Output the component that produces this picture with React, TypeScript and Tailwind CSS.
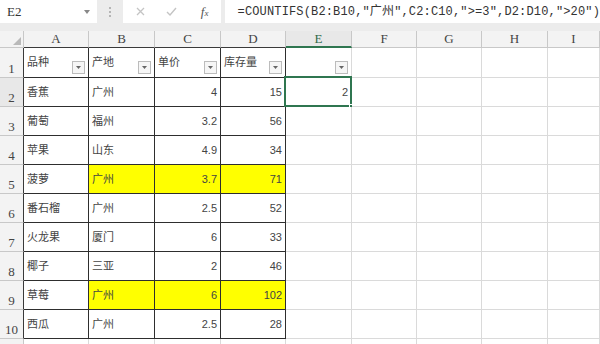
const colW = [
  'w-[65px]',
  'w-[66px]',
  'w-[66px]',
  'w-[65px]',
  'w-[66px]',
  'w-[65px]',
  'w-[65px]',
  'w-[66px]',
  'flex-1',
];
const letters = ['A', 'B', 'C', 'D', 'E', 'F', 'G', 'H', 'I'];

const data: string[][] = [
  ['品种', '产地', '单价', '库存量'],
  ['香蕉', '广州', '4', '15'],
  ['葡萄', '福州', '3.2', '56'],
  ['苹果', '山东', '4.9', '34'],
  ['菠萝', '广州', '3.7', '71'],
  ['番石榴', '广州', '2.5', '52'],
  ['火龙果', '厦门', '6', '33'],
  ['椰子', '三亚', '2', '46'],
  ['草莓', '广州', '6', '102'],
  ['西瓜', '广州', '2.5', '28'],
];

function FilterButton() {
  return (
    <div className="absolute right-[3px] bottom-[3px] w-[13px] h-[13px] border border-[#bcbcbc] bg-[#f6f6f6] flex items-center justify-center">
      <svg width="5" height="3" viewBox="0 0 5 3">
        <path d="M0 0 L5 0 L2.5 3 Z" fill="#666" />
      </svg>
    </div>
  );
}

function Cell({ r, c }: { r: number; c: number }) {
  const inTable = r <= 10 && c <= 3;
  const value = r <= 10 && c <= 3 ? data[r - 1][c] : r === 2 && c === 4 ? '2' : '';
  const right = (r >= 2 && (c === 2 || c === 3)) || (r === 2 && c === 4);
  const yellow = (r === 5 || r === 9) && c >= 1 && c <= 3;
  const active = r === 2 && c === 4;

  return (
    <div
      className={`relative shrink-0 h-full border-r border-b flex items-center px-[3px] ${colW[c]} ${
        inTable ? 'border-[#2e2e2e]' : 'border-[#dadada]'
      } ${right ? 'justify-end' : 'justify-start'} ${yellow ? 'bg-[#ffff00]' : 'bg-white'}`}
    >
      <span className="text-[11px] leading-none text-[#444]">{value}</span>
      {r === 1 && c <= 4 && <FilterButton />}
      {active && (
        <>
          <div className="absolute -left-[2px] -top-[2px] -right-[1px] -bottom-[1px] border-2 border-[#2f7650]" />
          <div className="absolute -right-[4px] -bottom-[4px] w-[6px] h-[6px] bg-[#2f7650] border border-white" />
        </>
      )}
    </div>
  );
}

export default function App() {
  const rowNums = [1, 2, 3, 4, 5, 6, 7, 8, 9, 10, 11];
  return (
    <div className="w-[600px] h-[344px] overflow-hidden bg-white font-['Liberation_Sans','Noto_Sans_CJK_SC',sans-serif]">
      {/* formula bar */}
      <div className="h-[31px] bg-[#ececec] flex items-start">
        <div className="w-[97px] h-[23px] bg-white flex items-center justify-between pl-[7px] pr-[7px]">
          <span className="font-['Liberation_Serif',serif] text-[13px] text-[#333]">E2</span>
          <svg width="6" height="4" viewBox="0 0 6 4">
            <path d="M0 0 L6 0 L3 4 Z" fill="#888" />
          </svg>
        </div>
        <div className="w-[26px] h-[23px] flex flex-col items-center justify-center gap-[2px]">
          <span className="w-[2px] h-[2px] bg-[#b5b5b5]" />
          <span className="w-[2px] h-[2px] bg-[#b5b5b5]" />
          <span className="w-[2px] h-[2px] bg-[#b5b5b5]" />
        </div>
        <div className="w-[98px] h-[23px] bg-white flex items-center">
          <svg className="ml-[13px]" width="9" height="9" viewBox="0 0 9 9">
            <path d="M1 1 L8 8 M8 1 L1 8" stroke="#c4c4c4" strokeWidth="1.3" />
          </svg>
          <svg className="ml-[21px]" width="11" height="9" viewBox="0 0 11 9">
            <path d="M1 5 L4 8 L10 1" stroke="#c4c4c4" strokeWidth="1.4" fill="none" />
          </svg>
          <span className="ml-[24px] font-['Liberation_Serif',serif] italic text-[13px] text-[#555]">
            f<span className="text-[9px]">x</span>
          </span>
        </div>
        <div className="ml-[4px] flex-1 h-[23px] bg-white flex items-center pl-[13px] whitespace-nowrap">
          <span className="font-['Liberation_Mono','Noto_Sans_CJK_SC',monospace] text-[12px] tracking-[0.15px] text-[#333]">
            =COUNTIFS(B2:B10,"广州",C2:C10,"&gt;=3",D2:D10,"&gt;20")
          </span>
        </div>
      </div>

      {/* column headers */}
      <div className="h-[17px] flex bg-[#f3f3f3]">
        <div className="w-[24px] shrink-0 h-full border-r border-b border-[#c8c8c8] relative">
          <svg className="absolute right-[2px] bottom-[2px]" width="8" height="8" viewBox="0 0 8 8">
            <path d="M8 0 L8 8 L0 8 Z" fill="#b9b9b9" />
          </svg>
        </div>
        {letters.map((l, i) => (
          <div
            key={l}
            className={`shrink-0 h-full border-r flex items-center justify-center font-['Liberation_Serif',serif] text-[13px] ${colW[i]} ${
              i === 4
                ? 'border-b-2 border-b-[#2f7650] border-r-[#c8c8c8] bg-[#e8e8e8] text-[#2f6a4a]'
                : i <= 3
                  ? 'border-b border-b-[#3a3a3a] border-r-[#c8c8c8] text-[#444]'
                  : 'border-b border-[#c8c8c8] text-[#444]'
            }`}
          >
            {l}
          </div>
        ))}
      </div>

      {/* rows */}
      {rowNums.map((r) => (
        <div key={r} className={`flex ${r === 1 ? 'h-[30px]' : 'h-[29px]'}`}>
          <div
            className={`w-[24px] shrink-0 h-full border-r border-b flex items-end justify-center pb-[2px] font-['Liberation_Serif',serif] text-[13px] leading-none text-[#444] ${
              r === 2 ? 'bg-[#e8e8e8] text-[#2f6a4a]' : 'bg-[#f3f3f3]'
            } ${r <= 10 ? 'border-r-[#3a3a3a] border-b-[#c8c8c8]' : 'border-[#c8c8c8]'}`}
          >
            {r}
          </div>
          {letters.map((_, c) => (
            <Cell key={c} r={r} c={c} />
          ))}
        </div>
      ))}
    </div>
  );
}
